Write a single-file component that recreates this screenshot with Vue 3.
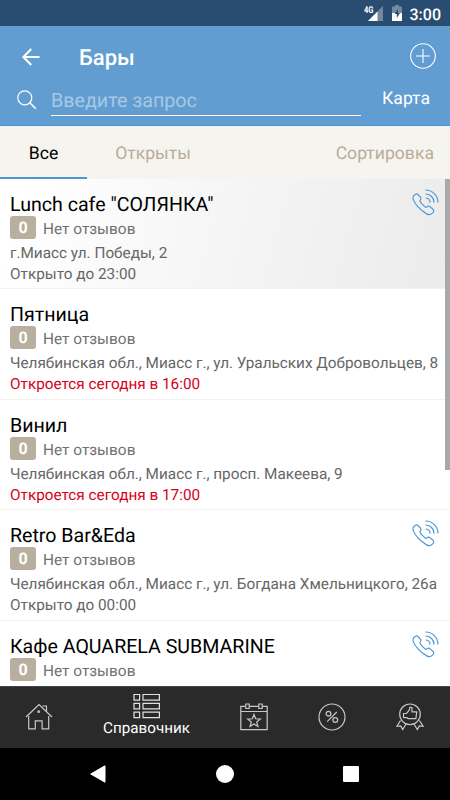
<script setup>
import { ref } from 'vue'

const query = ref('')
const activeTab = ref('all')

const places = ref([
  { id: 1, name: 'Lunch cafe "СОЛЯНКА"', address: 'г.Миасс ул. Победы, 2', hours: 'Открыто до 23:00', phone: true, promoted: true },
  { id: 2, name: 'Пятница', address: 'Челябинская обл., Миасс г., ул. Уральских Добровольцев, 8', hours: 'Откроется сегодня в 16:00', closed: true },
  { id: 3, name: 'Винил', address: 'Челябинская обл., Миасс г., просп. Макеева, 9', hours: 'Откроется сегодня в 17:00', closed: true },
  { id: 4, name: 'Retro Bar&Eda', address: 'Челябинская обл., Миасс г., ул. Богдана Хмельницкого, 26а', hours: 'Открыто до 00:00', phone: true },
  { id: 5, name: 'Кафе AQUARELA SUBMARINE', address: '', hours: '', phone: true }
])
</script>

<template>
  <div class="app">
    <div class="status-bar">
      <svg class="signal" width="20" height="18" viewBox="0 0 20 18">
        <path d="M19 1v15H4z" fill="#7489a0" />
        <path d="M13.5 6.5V16H4z" fill="#fff" />
        <text x="0" y="7.5" textLength="9.5" lengthAdjust="spacingAndGlyphs" class="network">4G</text>
      </svg>
      <svg class="battery" width="10" height="16" viewBox="0 0 10 16">
        <path d="M3 0h4v1.5h3V8H0V1.5h3z" fill="#7489a0" />
        <path d="M0 8h10v8H0z" fill="#fff" />
        <path d="M6 4L2.6 9h2.2v4L8 8H6z" fill="#294d70" />
      </svg>
      <span class="time">3:00</span>
    </div>

    <header class="header">
      <div class="title-row">
        <svg class="back" width="18" height="18" viewBox="0 0 18 18">
          <path d="M9.2 1L1.4 9l7.8 8M1.6 9H17.5" fill="none" stroke="#fff" stroke-width="2" />
        </svg>
        <h1>Бары</h1>
        <svg class="add" width="26" height="26" viewBox="0 0 26 26">
          <g fill="none" stroke="#fff" stroke-width="1.1">
            <circle cx="13" cy="13" r="12.3" />
            <path d="M13 6v14M6 13h14" />
          </g>
        </svg>
      </div>
      <div class="search-row">
        <svg class="search-icon" width="20" height="20" viewBox="0 0 20 20">
          <g fill="none" stroke="#fff" stroke-width="1.2">
            <circle cx="7.8" cy="7.8" r="7" />
            <path d="M12.8 12.8l6 6" stroke-width="1.6" />
          </g>
        </svg>
        <input v-model="query" type="text" placeholder="Введите запрос" />
        <button class="map-btn">Карта</button>
      </div>
    </header>

    <div class="tabs">
      <button class="tab tab-all" :class="{ active: activeTab === 'all' }" @click="activeTab = 'all'">Все</button>
      <button class="tab tab-open" :class="{ active: activeTab === 'open' }" @click="activeTab = 'open'">Открыты</button>
      <button class="tab tab-sort">Сортировка</button>
    </div>

    <main class="list">
      <div v-for="place in places" :key="place.id" class="place" :class="{ promoted: place.promoted }">
        <div class="info">
          <h2>{{ place.name }}</h2>
          <div class="rating">
            <span class="badge">0</span>
            <span class="reviews">Нет отзывов</span>
          </div>
          <p>{{ place.address }}</p>
          <p :class="{ closed: place.closed }">{{ place.hours }}</p>
        </div>
        <svg v-if="place.phone" class="phone" width="27" height="27" viewBox="0 0 28 28">
          <g fill="none" stroke="#4d97d3" stroke-width="1.2" stroke-linecap="round" stroke-linejoin="round">
            <path d="M2.2 6.5Q4 4.8 5.2 5Q6 5.1 9 8.8Q9.7 10.4 8.2 12.1Q8 13.2 10.5 15.7L13.8 18.8Q15 19.4 16.3 18Q17.8 17.4 19.2 18.8L22 21.3Q23.4 23.3 20.9 25.3Q18.6 27.6 15.2 25.8Q10.6 23.3 6 18.3Q2.3 14.2 1.1 10.2Q.7 8 2.2 6.5z" />
            <path d="M14.7 9.3a4.6 4.6 0 0 1 4 4.3M14.5 5.2a8.7 8.7 0 0 1 8.3 8.4M14.3 1a12.7 12.7 0 0 1 12.6 12.6" />
          </g>
        </svg>
      </div>
      <div class="scrollbar"></div>
    </main>

    <nav class="bottom-nav">
      <a class="nav-item">
        <svg width="28" height="28" viewBox="0 0 28 28">
          <path d="M1 14L14 1.5 27 14M3.7 13v12.8h6.6v-8h6.8v8h6.6V13M17.5 3h4v5.5" />
          <circle cx="13.7" cy="8.7" r=".8" />
        </svg>
      </a>
      <a class="nav-item current">
        <svg width="28" height="26" viewBox="0 0 28 26">
          <path d="M1 1.5h5.6v5.6H1zM10 1.5h16.4v5.6H10zM1 10.3h5.6v5.6H1zM10 10.3h16.4v5.6H10zM1 19.1h5.6v5.6H1zM10 19.1h16.4v5.6H10z" />
        </svg>
        <span>Справочник</span>
      </a>
      <a class="nav-item">
        <svg width="28" height="28" viewBox="0 0 28 28">
          <path d="M5.3 3.3H.8v23.4h26.4V3.3h-4.7M9.3 3.3h9M1 8.5h26" />
          <path d="M5.8 1h3.4v4.5H5.800zM18.8 1h3.4v4.5h-3.400z" />
          <path d="M14 11.5l1.7 4.3 4.6.3-3.6 2.9 1.2 4.5-3.9-2.5-3.9 2.5 1.2-4.5-3.6-2.9 4.6-.3z" />
        </svg>
      </a>
      <a class="nav-item">
        <svg width="28" height="28" viewBox="0 0 28 28">
          <circle cx="14" cy="14" r="13" />
          <circle cx="10.5" cy="10.7" r="2.4" />
          <circle cx="17.3" cy="17" r="2.4" />
          <path d="M18.8 9L9.2 18.7" />
        </svg>
      </a>
      <a class="nav-item">
        <svg width="28" height="28" viewBox="0 0 28 28">
          <circle cx="14" cy="11.3" r="10.3" />
          <path d="M7.5 10.5h3l2.7-3.3.8-3 2 .6v4h4.7l-.8 6.900H12l-1-1H7.5z" />
          <path d="M4.5 17.5L1 23.3l3.7-.3 2 3.5 3.500-5.800M23.500 17.500l3.500 5.800-3.700-.3-2 3.500-3.500-5.800" />
        </svg>
      </a>
    </nav>

    <div class="system-nav">
      <svg width="16" height="18" viewBox="0 0 16 18"><path d="M.7 9L15 .8v16.4z" fill="#fff" stroke="#fff" stroke-linejoin="round" /></svg>
      <span class="home"></span>
      <span class="recent"></span>
    </div>
  </div>
</template>

<style>
body {
  margin: 0;
}
</style>

<style scoped>
.app {
  display: flex;
  flex-direction: column;
  width: 450px;
  height: 800px;
  overflow: hidden;
  background: #fff;
  font-family: Roboto, "Noto Sans", sans-serif;
  text-rendering: geometricPrecision;
}

button {
  padding: 0;
  border: 0;
  background: none;
  font-family: inherit;
  text-rendering: inherit;
  cursor: pointer;
}

svg {
  flex: none;
  display: block;
}

.status-bar {
  display: flex;
  flex: none;
  align-items: center;
  justify-content: flex-end;
  box-sizing: border-box;
  height: 26px;
  padding-right: 9px;
  background: #294d70;
  color: #fff;
}

.signal {
  margin: 2px 8px 0 0;
}

.network {
  fill: #fff;
  font-size: 9.5px;
  font-weight: 700;
}

.battery {
  margin-right: 8px;
}

.time {
  padding-top: 2px;
  font-size: 16px;
  font-weight: 500;
  line-height: 23px;
}

.header {
  flex: none;
  box-sizing: border-box;
  height: 100px;
  border-bottom: 1px solid #4396d8;
  background: #619dd0;
}

.title-row {
  display: flex;
  align-items: center;
  height: 60px;
  padding: 0 14px 0 22px;
}

.back {
  margin-top: 2px;
}

h1 {
  flex: 1;
  margin: 4px 0 0 39px;
  color: #fff;
  font-size: 22px;
  font-weight: 500;
}

.search-row {
  display: flex;
  height: 30px;
  padding: 0 20px 0 17px;
}

.search-icon {
  margin: 4px 14px 0 0;
}

input {
  box-sizing: border-box;
  width: 310px;
  height: 30px;
  padding: 0;
  border: 0;
  border-bottom: 1px solid #fff;
  border-radius: 0;
  outline: 0;
  background: none;
  color: #fff;
  font-family: inherit;
  font-size: 19.7px;
  text-rendering: inherit;
}

input::placeholder {
  color: #a6c8e5;
  opacity: 1;
}

.map-btn {
  height: 25px;
  margin-left: auto;
  color: #fff;
  font-size: 17.6px;
}

.tabs {
  display: flex;
  flex: none;
  height: 53px;
  background: #f6f4ef;
}

.tab {
  box-sizing: border-box;
  padding-top: 4px;
  border-bottom: 2px solid transparent;
  color: #b8ad98;
  font-size: 17.6px;
}

.tab.active {
  border-bottom-color: #4a97d6;
  color: #000;
}

.tab-all {
  width: 87px;
}

.tab-open {
  width: 132px;
}

.tab-sort {
  margin-left: auto;
  padding-right: 16px;
}

.list {
  position: relative;
  flex: 1;
  min-height: 0;
  overflow: hidden;
}

.place {
  display: flex;
  justify-content: space-between;
  box-sizing: border-box;
  height: 110.4px;
  padding: 14px 10px 0;
  border-bottom: 1px solid #f3f2ec;
}

.place.promoted {
  background: linear-gradient(105deg, #fff 5%, #f4f4f4 55%, #ebebeb 100%);
}

.info {
  width: 0;
  white-space: nowrap;
}

h2 {
  margin: 0;
  color: #000;
  font-size: 19.6px;
  font-weight: 400;
  line-height: 23px;
}

.rating {
  display: flex;
  align-items: center;
  height: 23px;
  margin-bottom: 4px;
}

.badge {
  flex: none;
  width: 26px;
  height: 23px;
  margin-right: 7px;
  border-radius: 3px;
  background: #b9af9e;
  color: #fff;
  font-size: 16px;
  font-weight: 700;
  line-height: 24px;
  text-align: center;
}

.reviews {
  padding-top: 3px;
  color: #707070;
  font-size: 15.4px;
}

p {
  height: 21px;
  margin: 0;
  color: #666;
  font-size: 15.32px;
  line-height: 21px;
}

p.closed {
  color: #d8001b;
}

.phone {
  margin: -4px 1px 0 0;
}

.scrollbar {
  position: absolute;
  top: 0;
  right: 0;
  width: 5px;
  height: 291px;
  background: #a9a9a9;
}

.bottom-nav {
  display: flex;
  flex: none;
  box-sizing: border-box;
  height: 62px;
  border-top: 1px solid #42474a;
  background: #2a2a2a;
}

.nav-item {
  display: flex;
  align-items: center;
  justify-content: center;
  box-sizing: border-box;
  width: 78px;
  padding-bottom: 2px;
}

.nav-item svg {
  fill: none;
  stroke: #c8c8c8;
  stroke-width: 1.2;
}

.nav-item.current {
  flex-direction: column;
  justify-content: flex-start;
  width: 137px;
  padding-top: 6px;
  color: #fff;
}

.nav-item.current svg {
  stroke: #e2e2e2;
}

.nav-item.current span {
  font-size: 15.2px;
  line-height: 18px;
}

.system-nav {
  display: flex;
  flex: none;
  align-items: center;
  justify-content: space-between;
  height: 52px;
  padding: 0 91px 0 90px;
  background: #000;
}

.home {
  width: 18px;
  height: 18px;
  border-radius: 50%;
  background: #fff;
}

.recent {
  width: 16px;
  height: 16px;
  border-radius: 1px;
  background: #fff;
}
</style>
